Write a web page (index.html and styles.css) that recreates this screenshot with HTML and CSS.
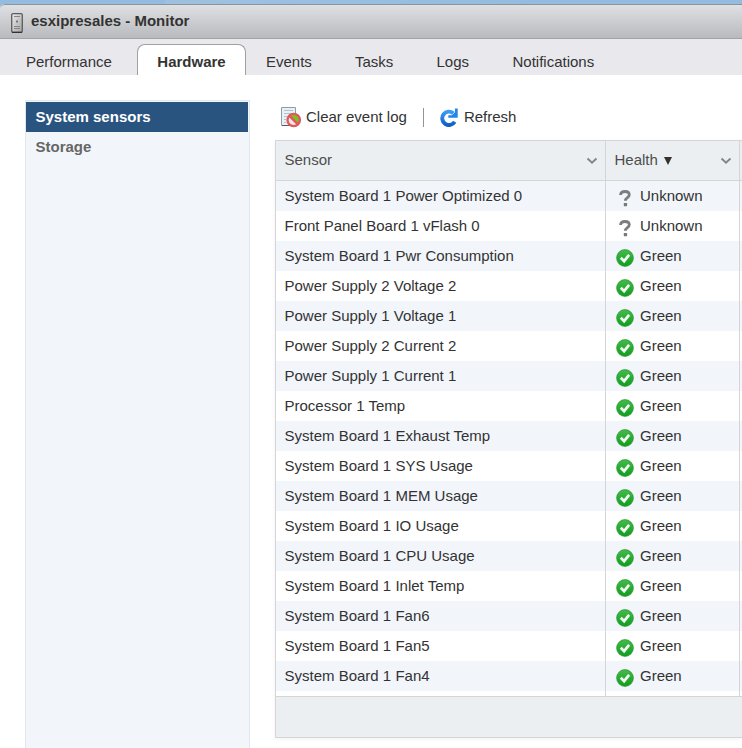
FILE: index.html
```html
<!DOCTYPE html>
<html lang="en">
<head>
    <meta charset="UTF-8">
    <meta name="viewport" content="width=device-width, initial-scale=1.0">
    <title>esxipresales - Monitor</title>
    <link rel="stylesheet" href="styles.css">
</head>
<body>
    <svg class="defs">
        <defs>
            <linearGradient id="green" x1="0" y1="0" x2="0" y2="1">
                <stop offset="0" stop-color="#46ba4c"/>
                <stop offset="1" stop-color="#0f9d1c"/>
            </linearGradient>
            <linearGradient id="blue" x1="0" y1="0" x2="0" y2="1">
                <stop offset="0" stop-color="#3a9bf5"/>
                <stop offset="1" stop-color="#1060c8"/>
            </linearGradient>
            <linearGradient id="metal" x1="0" y1="0" x2="1" y2="1">
                <stop offset="0" stop-color="#ececec"/>
                <stop offset="1" stop-color="#a4a4a4"/>
            </linearGradient>
        </defs>
        <symbol id="ok" viewBox="0 0 18 18">
            <circle cx="9" cy="9" r="8.4" fill="url(#green)" stroke="#2a9a35" stroke-width=".7"/>
            <path d="M4.800 8.700l3.300 3.400 5-6.300" fill="none" stroke="#f4fbf4" stroke-width="2.700"/>
        </symbol>
        <symbol id="unknown" viewBox="0 0 18 18">
            <path d="M4.500 6C4.700 3.500 6.500 2.500 9 2.500c2.700 0 4.300 1.200 4.300 3.300 0 2.900-3.900 2.900-3.900 6" fill="none" stroke="#7d7d7d" stroke-width="2.800"/>
            <rect x="7.800" y="14" width="3.300" height="3.200" rx=".6" fill="#777"/>
        </symbol>
        <symbol id="chevron" viewBox="0 0 12 8">
            <path d="M1.500 1.500l4.500 4.300 4.500-4.300" fill="none" stroke="#858585" stroke-width="1.900"/>
        </symbol>
    </svg>

    <div class="window">
        <div class="titlebar">
            <svg class="host-icon" viewBox="0 0 12 20">
                <rect x=".7" y=".7" width="10.600" height="18.600" rx="1.300" fill="url(#metal)" stroke="#5d5d5d" stroke-width="1.300"/>
                <path d="M1 19.300h10" stroke="#333" stroke-width="1.300"/>
                <path d="M3 3.500h6M3 13.500h6M3 15.500h6" stroke="#858585"/>
                <rect x="5" y="7.500" width="2" height="2" fill="#777"/>
            </svg>
            <span>esxipresales - Monitor</span>
        </div>

        <div class="tabs">
            <div class="tab performance">Performance</div>
            <div class="tab active">Hardware</div>
            <div class="tab events">Events</div>
            <div class="tab tasks">Tasks</div>
            <div class="tab logs">Logs</div>
            <div class="tab">Notifications</div>
        </div>

        <div class="content">
            <div class="sidebar">
                <div class="side-item selected">System sensors</div>
                <div class="side-item">Storage</div>
            </div>

            <div class="main">
                <div class="toolbar">
                    <svg class="clear-icon" viewBox="0 0 20 21">
                        <path d="M.5.5h14v18H.5z" fill="#e9f0f5" stroke="#8c9dad"/>
                        <path d="M1 18.500h9" stroke="#555f69"/>
                        <path d="M3 3.500h9M3 6.500h7M3 9.500h3M3 12.500h2M3 15.500h2" stroke="#b5c1cc"/>
                        <circle cx="12.700" cy="13" r="6" fill="#f3e5e0"/>
                        <path d="M9 8.200A6 6 0 0 1 17.500 16.500z" fill="#7cc41c"/>
                        <circle cx="12.700" cy="13" r="6.200" fill="none" stroke="#dc5a5e" stroke-width="2.300"/>
                        <path d="M8.500 8.800l8.500 8.500" stroke="#dc5a5e" stroke-width="2.600"/>
                    </svg>
                    <span class="clear-label">Clear event log</span>
                    <span class="divider"></span>
                    <svg class="refresh-icon" viewBox="0 0 18 19">
                        <path d="M13.300 5.200A6.700 6.700 0 1 0 14.700 13.700" fill="none" stroke="url(#blue)" stroke-width="3.900"/>
                        <path d="M17.700.5v9.300H8.300V7.200h3.500l3.200-3V.5z" fill="#2584e8"/>
                    </svg>
                    <span>Refresh</span>
                </div>

                <div class="grid">
                    <div class="row head">
                        <div class="sensor">Sensor<svg class="chevron"><use href="#chevron"/></svg></div>
                        <div class="health">Health<span class="sort"></span><svg class="chevron"><use href="#chevron"/></svg></div>
                        <div class="rest"></div>
                    </div>
                    <div class="row">
                        <div class="sensor">System Board 1 Power Optimized 0</div>
                        <div class="health"><svg class="status"><use href="#unknown"/></svg>Unknown</div>
                        <div class="rest"></div>
                    </div>
                    <div class="row">
                        <div class="sensor">Front Panel Board 1 vFlash 0</div>
                        <div class="health"><svg class="status"><use href="#unknown"/></svg>Unknown</div>
                        <div class="rest"></div>
                    </div>
                    <div class="row">
                        <div class="sensor">System Board 1 Pwr Consumption</div>
                        <div class="health"><svg class="status"><use href="#ok"/></svg>Green</div>
                        <div class="rest"></div>
                    </div>
                    <div class="row">
                        <div class="sensor">Power Supply 2 Voltage 2</div>
                        <div class="health"><svg class="status"><use href="#ok"/></svg>Green</div>
                        <div class="rest"></div>
                    </div>
                    <div class="row">
                        <div class="sensor">Power Supply 1 Voltage 1</div>
                        <div class="health"><svg class="status"><use href="#ok"/></svg>Green</div>
                        <div class="rest"></div>
                    </div>
                    <div class="row">
                        <div class="sensor">Power Supply 2 Current 2</div>
                        <div class="health"><svg class="status"><use href="#ok"/></svg>Green</div>
                        <div class="rest"></div>
                    </div>
                    <div class="row">
                        <div class="sensor">Power Supply 1 Current 1</div>
                        <div class="health"><svg class="status"><use href="#ok"/></svg>Green</div>
                        <div class="rest"></div>
                    </div>
                    <div class="row">
                        <div class="sensor">Processor 1 Temp</div>
                        <div class="health"><svg class="status"><use href="#ok"/></svg>Green</div>
                        <div class="rest"></div>
                    </div>
                    <div class="row">
                        <div class="sensor">System Board 1 Exhaust Temp</div>
                        <div class="health"><svg class="status"><use href="#ok"/></svg>Green</div>
                        <div class="rest"></div>
                    </div>
                    <div class="row">
                        <div class="sensor">System Board 1 SYS Usage</div>
                        <div class="health"><svg class="status"><use href="#ok"/></svg>Green</div>
                        <div class="rest"></div>
                    </div>
                    <div class="row">
                        <div class="sensor">System Board 1 MEM Usage</div>
                        <div class="health"><svg class="status"><use href="#ok"/></svg>Green</div>
                        <div class="rest"></div>
                    </div>
                    <div class="row">
                        <div class="sensor">System Board 1 IO Usage</div>
                        <div class="health"><svg class="status"><use href="#ok"/></svg>Green</div>
                        <div class="rest"></div>
                    </div>
                    <div class="row">
                        <div class="sensor">System Board 1 CPU Usage</div>
                        <div class="health"><svg class="status"><use href="#ok"/></svg>Green</div>
                        <div class="rest"></div>
                    </div>
                    <div class="row">
                        <div class="sensor">System Board 1 Inlet Temp</div>
                        <div class="health"><svg class="status"><use href="#ok"/></svg>Green</div>
                        <div class="rest"></div>
                    </div>
                    <div class="row">
                        <div class="sensor">System Board 1 Fan6</div>
                        <div class="health"><svg class="status"><use href="#ok"/></svg>Green</div>
                        <div class="rest"></div>
                    </div>
                    <div class="row">
                        <div class="sensor">System Board 1 Fan5</div>
                        <div class="health"><svg class="status"><use href="#ok"/></svg>Green</div>
                        <div class="rest"></div>
                    </div>
                    <div class="row">
                        <div class="sensor">System Board 1 Fan4</div>
                        <div class="health"><svg class="status"><use href="#ok"/></svg>Green</div>
                        <div class="rest"></div>
                    </div>
                    <div class="row spacer">
                        <div class="sensor"></div>
                        <div class="health"></div>
                        <div class="rest"></div>
                    </div>
                    <div class="grid-footer"></div>
                </div>
            </div>
        </div>
    </div>
</body>
</html>
```

FILE: styles.css
```css
* {
    box-sizing: border-box;
}

body {
    margin: 0;
    height: 748px;
    padding-top: 4px;
    overflow: hidden;
    font-family: "Liberation Sans", Arial, sans-serif;
    font-size: 15px;
    color: #333;
    background: linear-gradient(115deg, #93bce0 0, #93bce0 150px, #9ec1e1 152px, #93bce0 500px);
}

svg {
    display: block;
    flex-shrink: 0;
}

.defs {
    position: absolute;
    width: 0;
    height: 0;
}

.window {
    height: 744px;
    display: flex;
    flex-direction: column;
    background: #fff;
    border-radius: 5px 0 0 0;
    overflow: hidden;
}

/* Title */
.titlebar {
    height: 35px;
    flex-shrink: 0;
    display: flex;
    align-items: center;
    padding-left: 11px;
    font-weight: bold;
    border-top: 1px solid #919294;
    border-bottom: 1px solid #a2a2a4;
    border-radius: 5px 0 0 0;
    background: linear-gradient(#dfe0e3, #b9babd);
}

.titlebar span {
    padding-bottom: 2px;
}

.host-icon {
    width: 12px;
    height: 20px;
    margin: 2px 8px 0 0;
}

/* Tabs */
.tabs {
    height: 36px;
    flex-shrink: 0;
    display: flex;
    padding: 5px 0 0 26px;
    background: #e8e8ed;
}

.tab {
    line-height: 36px;
    white-space: nowrap;
}

.performance {
    width: 111px;
}

.tab.active {
    width: 109px;
    margin-right: 20px;
    line-height: 34px;
    text-align: center;
    font-weight: bold;
    background: #fff;
    border: 1px solid #a0a0a3;
    border-bottom: 0;
    border-radius: 8px 8px 0 0;
}

.events {
    width: 89px;
}

.tasks {
    width: 81.5px;
}

.logs {
    width: 76px;
}

/* Content */
.content {
    flex: 1;
    display: flex;
    gap: 25px;
    padding: 25px 0 0 25px;
}

.sidebar {
    width: 225px;
    flex-shrink: 0;
    padding: 1px 1px 0 0;
    background: #f2f6fb;
    border: 1px solid #e1e7ef;
    border-bottom: 0;
}

.side-item {
    height: 30px;
    padding-left: 9.5px;
    line-height: 30px;
    font-weight: bold;
    color: #666;
}

.side-item.selected {
    color: #fff;
    background: #2a5480;
}

.main {
    flex: 1;
}

.toolbar {
    height: 40px;
    display: flex;
    align-items: center;
    padding: 0 0 6px 6px;
}

.toolbar span {
    padding-bottom: 2px;
}

.clear-icon {
    width: 20px;
    height: 21px;
    margin-right: 5px;
}

.divider {
    width: 1px;
    height: 19px;
    margin: 0 16px;
    background: #949494;
}

.refresh-icon {
    width: 18px;
    height: 19px;
    margin-right: 6px;
}

/* Sensors grid */
.grid {
    border: 1px solid #d3d5d7;
    border-right: 0;
    box-shadow: 0 1px 4px rgba(0,0,0,0.06);
}

.row {
    height: 30px;
    display: flex;
    line-height: 30px;
    background: #fff;
}

.row:nth-child(even) {
    background: #f2f6fb;
}

.sensor,
.health {
    display: flex;
    padding-left: 8.5px;
    border-right: 1px solid #d3d5d7;
}

.sensor {
    width: 330px;
}

.health {
    width: 134px;
}

.rest {
    flex: 1;
}

.row.head {
    height: 40px;
    line-height: 38px;
    color: #4d4d4d;
    background: #ebeff2;
    border-bottom: 1px solid #d3d5d7;
}

.chevron {
    width: 12px;
    height: 8px;
    margin: 16px 7px 0 auto;
}

.sort {
    margin: 16px 0 0 6px;
    height: 0;
    border: 4.5px solid transparent;
    border-top: 8px solid #333;
    border-bottom: 0;
}

.status {
    width: 18px;
    height: 18px;
    margin: 8px 6px 0 1.5px;
}

.row.spacer {
    height: 5px;
    background: #fff;
}

.grid-footer {
    height: 41px;
    background: #ebeff2;
    border-top: 1px solid #d3d5d7;
}
```
